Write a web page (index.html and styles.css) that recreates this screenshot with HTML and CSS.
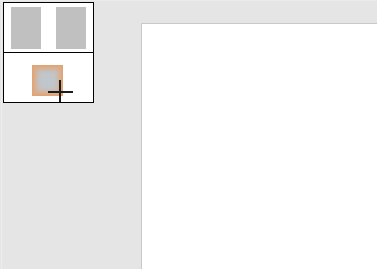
FILE: index.html
```html
<!DOCTYPE html>
<html>
<head>
<meta charset="utf-8">
<link rel="stylesheet" href="styles.css">
</head>
<body>
<div class="app">
  <aside class="side">
    <div class="tools">
      <div class="cell cell-top">
        <div class="page"></div>
        <div class="page"></div>
      </div>
      <div class="cell cell-bottom">
        <div class="swatch"><div class="swatch-core"></div></div>
        <div class="cursor">
          <span class="cur-v"></span>
          <span class="cur-h"></span>
        </div>
      </div>
    </div>
  </aside>
  <main class="stage">
    <div class="canvas"></div>
  </main>
</div>
</body>
</html>
```
FILE: styles.css
```css
html, body {
  margin: 0;
  padding: 0;
  width: 377px;
  height: 269px;
  overflow: hidden;
  background: #e5e5e5;
  font-family: "Liberation Sans", Arial, sans-serif;
}
.app {
  display: flex;
  height: 269px;
  border-top: 1px solid #ececec;
  box-sizing: border-box;
}
.side {
  width: 140px;
  flex: none;
  padding: 1px 0 0 1px;
  box-sizing: border-box;
  border-left: 1px solid #ececec;
  margin-left: 1px;
}
.tools {
  width: 91px;
  border: 1px solid #000;
  box-sizing: border-box;
  background: #fff;
}
.cell-top {
  border-bottom: 1px solid #000;
  display: flex;
  gap: 15px;
  padding: 4px 0 0 7px;
  height: 45px;
}
.page {
  width: 30px;
  height: 42px;
  background: #c0c0c0;
}
.cell-bottom {
  position: relative;
  height: 49px;
  padding: 12px 0 0 28px;
  box-sizing: border-box;
}
.swatch {
  width: 31px;
  height: 31px;
  background: #e0a678;
  padding: 2px;
  box-sizing: border-box;
}
.swatch-core {
  width: 100%;
  height: 100%;
  background: #bfc7cd;
  box-shadow: inset 0 0 5px 3px #dcab86;
}
.cursor {
  position: absolute;
  left: 44px;
  top: 27px;
  width: 25px;
  height: 22px;
}
.cur-v {
  position: absolute;
  left: 11px;
  top: 0;
  width: 2px;
  height: 22px;
  background: #1c1c1c;
}
.cur-h {
  position: absolute;
  left: 0;
  top: 11px;
  width: 25px;
  height: 2px;
  background: #1c1c1c;
}
.stage {
  flex: 1;
  padding-top: 22px;
  display: flex;
  flex-direction: column;
}
.canvas {
  flex: 1;
  background: #fff;
  border-top: 1px solid #c9c9c9;
  border-left: 1px solid #c9c9c9;
}
```
